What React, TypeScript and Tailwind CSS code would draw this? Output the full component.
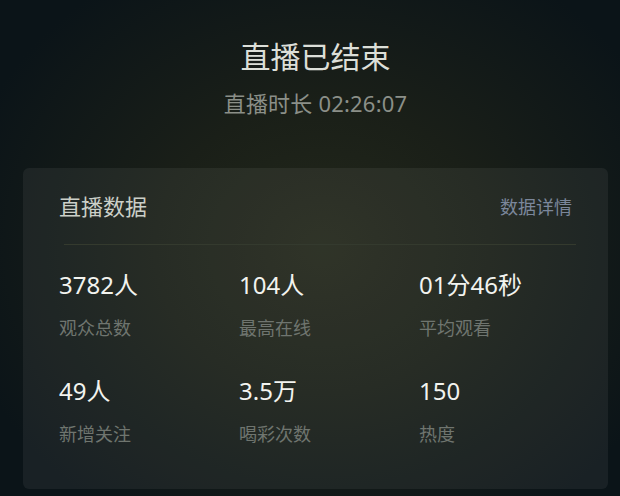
const stats = [
  { value: '3782人', label: '观众总数' },
  { value: '104人', label: '最高在线' },
  { value: '01分46秒', label: '平均观看' },
  { value: '49人', label: '新增关注' },
  { value: '3.5万', label: '喝彩次数' },
  { value: '150', label: '热度' },
];

export default function App() {
  return (
    <div
      className="w-[620px] h-[496px] overflow-hidden bg-[radial-gradient(ellipse_60%_65%_at_52%_50%,#23281b_0%,#1a1f18_45%,#0b1418_100%)] pl-[23px] pr-[12px] pt-[38px]"
      style={{ fontFamily: '"Noto Sans", "Noto Sans CJK SC", sans-serif' }}
    >
      {/* Header */}
      <div className="flex flex-col items-center">
        <h1 className="text-[30px] leading-[38px] text-[#dcdfd8]">直播已结束</h1>
        <p className="mt-[12px] text-[22px] leading-[30px] text-[#8b8f88] tracking-[0.2px]">直播时长 02:26:07</p>
      </div>

      {/* Card */}
      <div className="mt-[50px] w-[585px] h-[321px] rounded-md bg-white/[0.06]">
        <div className="flex items-center justify-between pl-[36px] pr-[36px] pt-[22px] h-[76px]">
          <span className="text-[22px] leading-[30px] text-[#cbcfc8] -mt-[22px]">直播数据</span>
          <span className="text-[18px] leading-[26px] text-[#7b879b] -mt-[20px]">数据详情</span>
        </div>
        <div className="ml-[41px] mr-[32px] h-px bg-[#343a2e]" />
        <div className="grid grid-cols-[180px_180px_180px] gap-y-[35px] pl-[36px] pt-[24px]">
          {stats.map((s) => (
            <div key={s.label} className="flex flex-col">
              <span className="text-[24px] leading-[32px] text-[#f2f3ef]">{s.value}</span>
              <span className="mt-[15px] text-[18px] leading-[24px] text-[#6f756f]">{s.label}</span>
            </div>
          ))}
        </div>
      </div>
    </div>
  );
}
